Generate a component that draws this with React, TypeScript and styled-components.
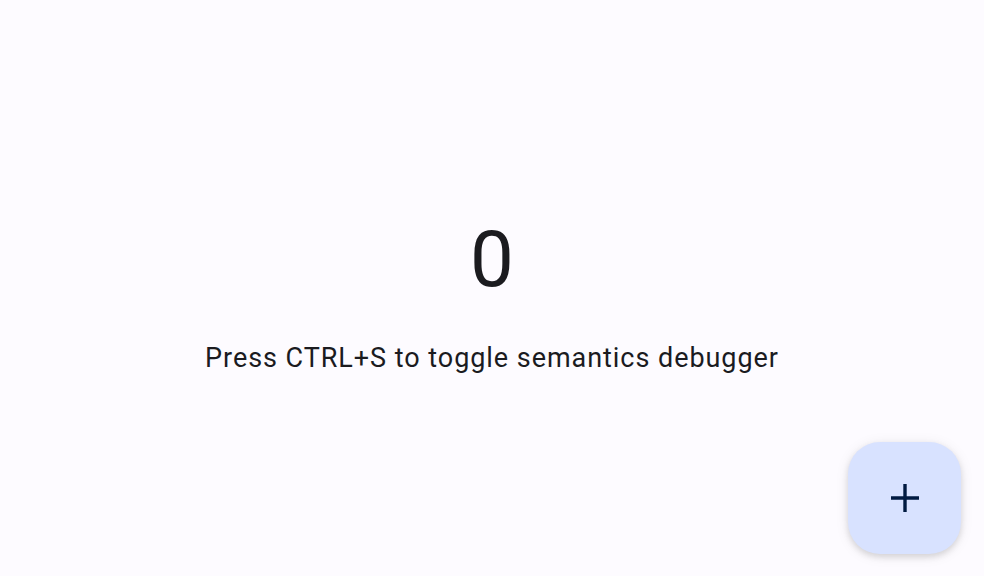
import React from "react";
import styled, { createGlobalStyle } from "styled-components";

const Global = createGlobalStyle`
  html, body { margin: 0; padding: 0; background: #fdfbff; }
  body { font-family: Roboto, "Noto Sans", sans-serif; }
`;

const Page = styled.main`
  position: relative;
  width: 100vw;
  height: 100vh;
  background: #fdfbff;
  display: flex;
  flex-direction: column;
  align-items: center;
  justify-content: center;
  overflow: hidden;
`;

const Counter = styled.div`
  font-size: 78px;
  line-height: 1;
  color: #1b1b1f;
  margin-top: 19px;
`;

const Hint = styled.div`
  font-size: 27px;
  line-height: 1.2;
  letter-spacing: 0.95px;
  color: #1b1b1f;
  margin-top: 43px;
`;

const Fab = styled.button`
  position: absolute;
  right: 23px;
  bottom: 22px;
  width: 113px;
  height: 112px;
  border: none;
  border-radius: 32px;
  background: #d8e2ff;
  display: flex;
  align-items: center;
  justify-content: center;
  box-shadow: 0 3px 6px rgba(0, 0, 0, 0.12), 0 2px 14px rgba(0, 0, 0, 0.08);
  cursor: pointer;
  padding: 0;
`;

export default function App() {
  return (
    <>
      <Global />
      <Page>
        <Counter>0</Counter>
        <Hint>Press CTRL+S to toggle semantics debugger</Hint>
        <Fab aria-label="Increment">
          <svg width="30" height="30" viewBox="0 0 30 30">
            <path d="M15 1v28M1 15h28" stroke="#001a41" strokeWidth="3.4" fill="none" />
          </svg>
        </Fab>
      </Page>
    </>
  );
}
